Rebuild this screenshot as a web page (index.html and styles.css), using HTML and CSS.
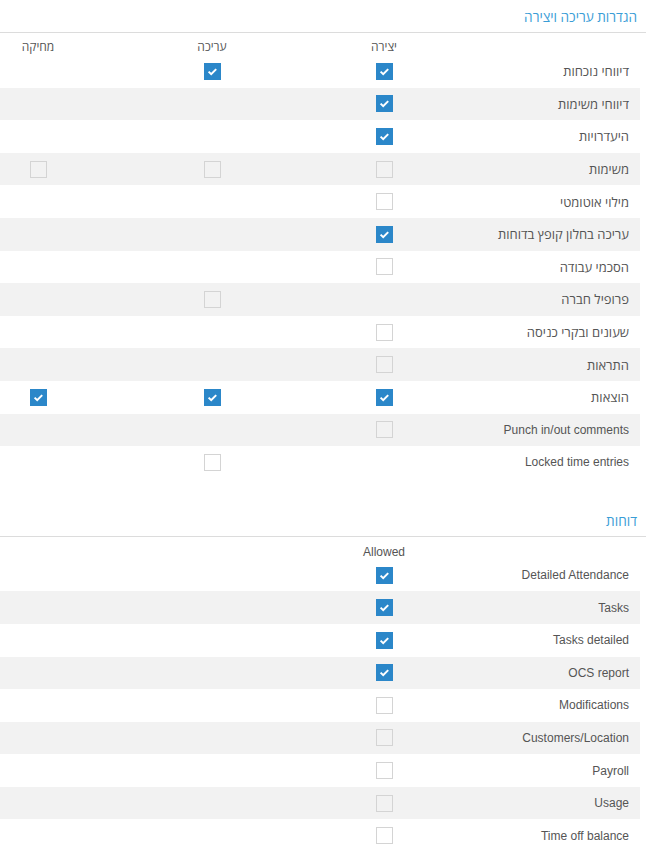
FILE: index.html
```html
<!DOCTYPE html>
<html lang="he" dir="rtl">

<head>
    <meta charset="UTF-8">
    <meta name="viewport" content="width=device-width, initial-scale=1.0">
    <title>הרשאות</title>
    <link rel="stylesheet" href="styles.css">
</head>

<body>
    <!-- Edit / create permissions -->
    <section class="section">
        <h2 class="section-title">הגדרות עריכה ויצירה</h2>
        <div class="grid">
            <div class="row head">
                <div></div>
                <div class="cell">יצירה</div>
                <div class="cell">עריכה</div>
                <div class="cell">מחיקה</div>
            </div>
            <div class="row">
                <div class="label">דיווחי נוכחות</div>
                <div class="cell"><span class="cb on"></span></div>
                <div class="cell"><span class="cb on"></span></div>
                <div class="cell"></div>
            </div>
            <div class="row">
                <div class="label">דיווחי משימות</div>
                <div class="cell"><span class="cb on"></span></div>
                <div class="cell"></div>
                <div class="cell"></div>
            </div>
            <div class="row">
                <div class="label">היעדרויות</div>
                <div class="cell"><span class="cb on"></span></div>
                <div class="cell"></div>
                <div class="cell"></div>
            </div>
            <div class="row">
                <div class="label">משימות</div>
                <div class="cell"><span class="cb"></span></div>
                <div class="cell"><span class="cb"></span></div>
                <div class="cell"><span class="cb"></span></div>
            </div>
            <div class="row">
                <div class="label">מילוי אוטומטי</div>
                <div class="cell"><span class="cb"></span></div>
                <div class="cell"></div>
                <div class="cell"></div>
            </div>
            <div class="row">
                <div class="label">עריכה בחלון קופץ בדוחות</div>
                <div class="cell"><span class="cb on"></span></div>
                <div class="cell"></div>
                <div class="cell"></div>
            </div>
            <div class="row">
                <div class="label">הסכמי עבודה</div>
                <div class="cell"><span class="cb"></span></div>
                <div class="cell"></div>
                <div class="cell"></div>
            </div>
            <div class="row">
                <div class="label">פרופיל חברה</div>
                <div class="cell"></div>
                <div class="cell"><span class="cb"></span></div>
                <div class="cell"></div>
            </div>
            <div class="row">
                <div class="label">שעונים ובקרי כניסה</div>
                <div class="cell"><span class="cb"></span></div>
                <div class="cell"></div>
                <div class="cell"></div>
            </div>
            <div class="row">
                <div class="label">התראות</div>
                <div class="cell"><span class="cb"></span></div>
                <div class="cell"></div>
                <div class="cell"></div>
            </div>
            <div class="row">
                <div class="label">הוצאות</div>
                <div class="cell"><span class="cb on"></span></div>
                <div class="cell"><span class="cb on"></span></div>
                <div class="cell"><span class="cb on"></span></div>
            </div>
            <div class="row">
                <div class="label en">Punch in/out comments</div>
                <div class="cell"><span class="cb"></span></div>
                <div class="cell"></div>
                <div class="cell"></div>
            </div>
            <div class="row">
                <div class="label en">Locked time entries</div>
                <div class="cell"></div>
                <div class="cell"><span class="cb"></span></div>
                <div class="cell"></div>
            </div>
        </div>
    </section>

    <!-- Reports -->
    <section class="section">
        <h2 class="section-title">דוחות</h2>
        <div class="grid">
            <div class="row head">
                <div></div>
                <div class="cell en">Allowed</div>
                <div class="cell"></div>
                <div class="cell"></div>
            </div>
            <div class="row">
                <div class="label en">Detailed Attendance</div>
                <div class="cell"><span class="cb on"></span></div>
            </div>
            <div class="row">
                <div class="label en">Tasks</div>
                <div class="cell"><span class="cb on"></span></div>
            </div>
            <div class="row">
                <div class="label en">Tasks detailed</div>
                <div class="cell"><span class="cb on"></span></div>
            </div>
            <div class="row">
                <div class="label en">OCS report</div>
                <div class="cell"><span class="cb on"></span></div>
            </div>
            <div class="row">
                <div class="label en">Modifications</div>
                <div class="cell"><span class="cb"></span></div>
            </div>
            <div class="row">
                <div class="label en">Customers/Location</div>
                <div class="cell"><span class="cb"></span></div>
            </div>
            <div class="row">
                <div class="label en">Payroll</div>
                <div class="cell"><span class="cb"></span></div>
            </div>
            <div class="row">
                <div class="label en">Usage</div>
                <div class="cell"><span class="cb"></span></div>
            </div>
            <div class="row">
                <div class="label en">Time off balance</div>
                <div class="cell"><span class="cb"></span></div>
            </div>
        </div>
    </section>
</body>

</html>
```

FILE: styles.css
```css
/* Global styles */

body {
    margin: 0 3px 0 0;
    width: 646px;
    font-family: "Open Sans", "DejaVu Sans", sans-serif;
    font-size: 13px;
    color: #555;
    background-color: #fff;
}

.en {
    font-family: "Liberation Sans", Arial, sans-serif;
    font-size: 12px;
}

.section + .section {
    margin-top: 25px;
}

/* Section heading */

.section-title {
    margin: 0;
    height: 33px;
    box-sizing: border-box;
    padding: 7px 9px 0 0;
    font-size: 13.6px;
    font-weight: normal;
    color: #3a9dd6;
    border-bottom: 1px solid #dcdcdc;
}

/* Permission grid */

.grid {
    width: 640px;
    margin-right: 6px;
}

.row {
    display: grid;
    grid-template-columns: 220px 72px 272px 76px;
    align-items: center;
    height: 32.6px;
}

.row:nth-child(odd) {
    background-color: #f2f2f2;
    /* striped rows, header row is first */
}

.row.head {
    height: 22px;
    background-color: transparent;
    align-items: end;
    font-size: 12px;
}

.label {
    padding-right: 11px;
}

.cell {
    display: flex;
    justify-content: center;
}

/* Checkboxes */

.cb {
    display: block;
    width: 17px;
    height: 17px;
    box-sizing: border-box;
    border: 1px solid #d4d4d4;
}

.cb.on {
    border-color: #2b87c9;
    background-color: #2b87c9;
    background-image: url("data:image/svg+xml;utf8,<svg xmlns='http://www.w3.org/2000/svg' width='17' height='17' viewBox='0 0 17 17'><path d='M4.6 8.6l2.6 2.5 5-5' fill='none' stroke='white' stroke-width='2'/></svg>");
    background-position: center;
    background-repeat: no-repeat;
}
```
